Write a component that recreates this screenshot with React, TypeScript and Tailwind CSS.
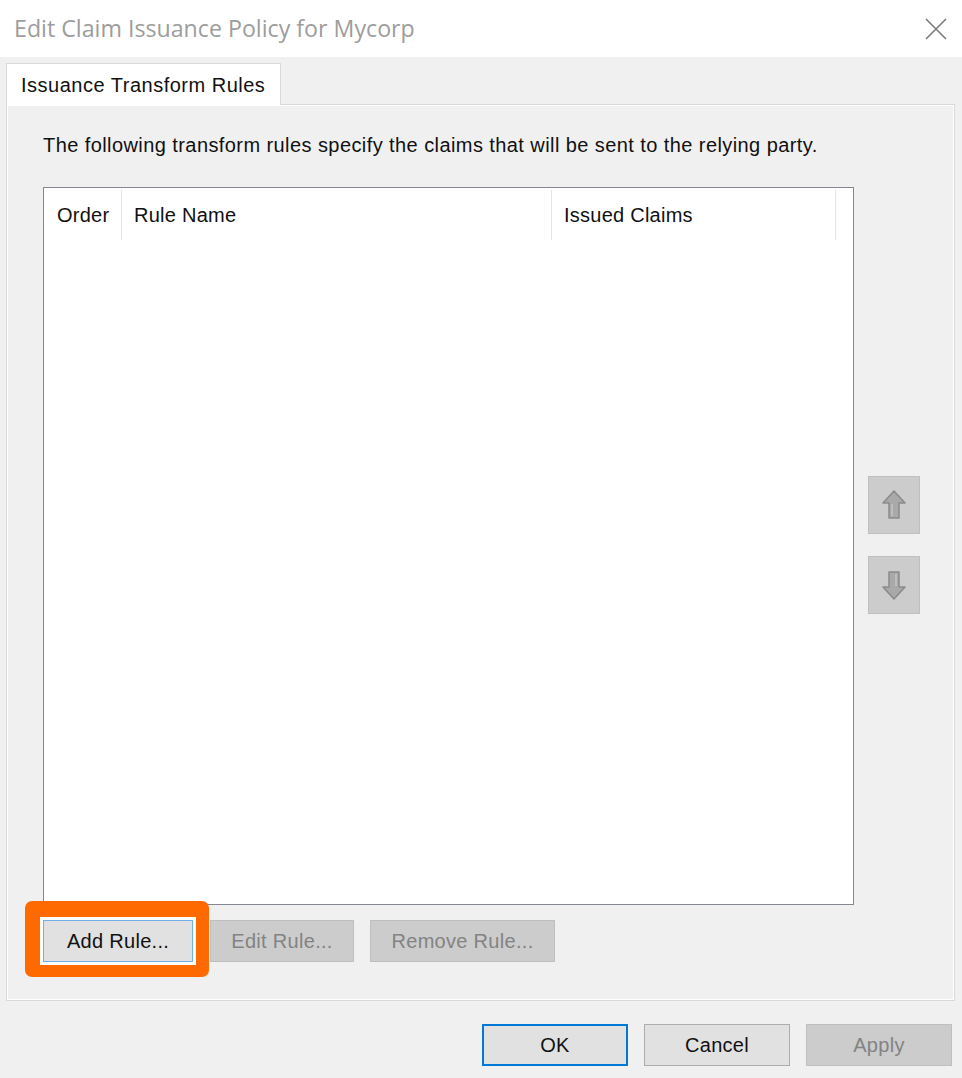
import React from 'react'

const ui = { fontFamily: '"Liberation Sans", Arial, sans-serif' }
const title = { fontFamily: '"Open Sans", "Noto Sans", sans-serif' }

function Arrow({ down = false }: { down?: boolean }) {
  return (
    <svg width="26" height="32" viewBox="0 0 26 32" className={down ? 'rotate-180' : ''}>
      <path
        d="M13 2 L24 14 L18 14 L18 29 L8 29 L8 14 L2 14 Z"
        fill="#a9a9a9"
        stroke="#8a8a8a"
        strokeWidth="1.5"
        strokeLinejoin="round"
      />
      <path d="M11 15 L11 27" stroke="#c4c4c4" strokeWidth="1.5" />
    </svg>
  )
}

function Btn({
  label,
  disabled = false,
  focused = false,
  className = '',
}: {
  label: string
  disabled?: boolean
  focused?: boolean
  className?: string
}) {
  const look = disabled
    ? 'bg-[#cccccc] border-[#bfbfbf] text-[#838383]'
    : focused
      ? 'bg-[#e1e1e1] border-[#0078d7] border-2 text-[#111]'
      : 'bg-[#e1e1e1] border-[#adadad] text-[#111]'
  return (
    <div className={`flex items-center justify-center border text-[20px] tracking-[0.3px] ${look} ${className}`}>
      {label}
    </div>
  )
}

export default function App() {
  return (
    <div className="w-[962px] h-[1078px] bg-[#f0f0f0] flex flex-col overflow-hidden" style={ui}>
      {/* title bar */}
      <div className="h-[57px] bg-white flex items-center justify-between pl-[14px] pr-[14px] shrink-0">
        <span className="text-[23.2px] text-[#9d9d9d]" style={title}>
          Edit Claim Issuance Policy for Mycorp
        </span>
        <svg width="24" height="24" viewBox="0 0 24 24">
          <path d="M2 2 L22 22 M22 2 L2 22" stroke="#7a7a7a" strokeWidth="1.6" />
        </svg>
      </div>

      <div className="flex-1 flex flex-col pl-[6px] pr-[7px] pt-[6px]">
        {/* tab strip */}
        <div className="flex">
          <div className="w-[275px] h-[42px] bg-white border border-b-0 border-[#d9d9d9] -mb-px relative z-10 flex items-center pl-[14px] text-[20px] text-[#111] tracking-[0.5px]">
            Issuance Transform Rules
          </div>
        </div>

        {/* tab page */}
        <div className="h-[897px] border border-[#d9d9d9] shadow-[inset_1px_1px_0_#ffffff,inset_-1px_-1px_0_#ffffff] bg-[#f0f0f0] flex flex-col pl-[36px] pt-[26px]">
          <p className="text-[20px] text-[#111] tracking-[0.42px] leading-[28px]">
            The following transform rules specify the claims that will be sent to the relying party.
          </p>

          <div className="flex mt-[28px]">
            {/* rules list */}
            <div className="w-[811px] h-[718px] bg-white border border-[#828790] pt-[2px] pl-[2px] pr-[2px]">
              <div className="flex h-[50px] text-[20px] text-[#111] tracking-[0.25px]">
                <div className="w-[76px] border-r border-[#e5e5e5] flex items-center pl-[11px]">Order</div>
                <div className="w-[430px] border-r border-[#e5e5e5] flex items-center pl-[12px]">Rule Name</div>
                <div className="w-[284px] border-r border-[#e5e5e5] flex items-center pl-[12px]">Issued Claims</div>
              </div>
            </div>

            {/* move up / down */}
            <div className="flex flex-col gap-[22px] ml-[14px] mt-[289px]">
              <div className="w-[52px] h-[58px] bg-[#cccccc] border border-[#bfbfbf] flex items-center justify-center">
                <Arrow />
              </div>
              <div className="w-[52px] h-[58px] bg-[#cccccc] border border-[#bfbfbf] flex items-center justify-center">
                <Arrow down />
              </div>
            </div>
          </div>

          <div className="flex items-center mt-[15px]">
            <div className="relative w-[150px] h-[42px]">
              <div className="absolute left-[-18px] top-[-19px] w-[184px] h-[76px] bg-[#ff6a00] rounded-[7px]" />
              <div className="absolute inset-[-3px] bg-white" />
              <Btn label="Add Rule..." className="relative w-full h-full !border-[#6fb0e8]" />
            </div>
            <Btn label="Edit Rule..." disabled className="w-[144px] h-[42px] ml-[17px]" />
            <Btn label="Remove Rule..." disabled className="w-[185px] h-[42px] ml-[16px]" />
          </div>
        </div>

        {/* dialog buttons */}
        <div className="flex justify-end gap-[16px] mt-[23px] pr-[3px]">
          <Btn label="OK" focused className="w-[146px] h-[42px]" />
          <Btn label="Cancel" className="w-[146px] h-[42px]" />
          <Btn label="Apply" disabled className="w-[146px] h-[42px]" />
        </div>
      </div>
    </div>
  )
}
